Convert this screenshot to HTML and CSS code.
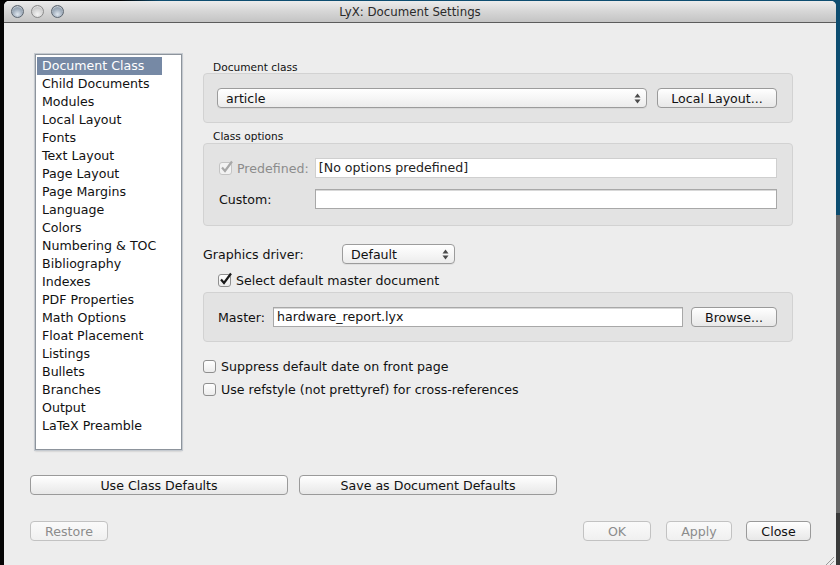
FILE: index.html
```html
<!DOCTYPE html>
<html>
<head>
<meta charset="utf-8">
<link rel="stylesheet" href="styles.css">
</head>
<body>
<div class="screen">
  <div class="edge-left"></div>
  <div class="window">
    <div class="titlebar">
      <div class="lights">
        <span class="light"></span>
        <span class="light light-mid"></span>
        <span class="light"></span>
      </div>
      <div class="title">LyX: Document Settings</div>
    </div>
    <div class="content">
      <div class="main">
        <div class="list">
          <div class="item selected">Document Class</div>
          <div class="item">Child Documents</div>
          <div class="item">Modules</div>
          <div class="item">Local Layout</div>
          <div class="item">Fonts</div>
          <div class="item">Text Layout</div>
          <div class="item">Page Layout</div>
          <div class="item">Page Margins</div>
          <div class="item">Language</div>
          <div class="item">Colors</div>
          <div class="item">Numbering &amp; TOC</div>
          <div class="item">Bibliography</div>
          <div class="item">Indexes</div>
          <div class="item">PDF Properties</div>
          <div class="item">Math Options</div>
          <div class="item">Float Placement</div>
          <div class="item">Listings</div>
          <div class="item">Bullets</div>
          <div class="item">Branches</div>
          <div class="item">Output</div>
          <div class="item">LaTeX Preamble</div>
        </div>
        <div class="rcol">
          <div class="glabel">Document class</div>
          <div class="group g1">
            <div class="combo combo-class"><span class="combo-text">article</span><span class="arrows"><svg width="7" height="11" viewBox="0 0 7 11"><path d="M3.5 0.5 L6.5 4.5 H0.5 Z" fill="#4a4a4a"/><path d="M3.5 10.5 L6.5 6.5 H0.5 Z" fill="#4a4a4a"/></svg></span></div>
            <div class="btn btn-local">Local Layout...</div>
          </div>
          <div class="glabel glabel2">Class options</div>
          <div class="group g2">
            <div class="frow">
              <div class="flabel disabled"><span class="cb cb-dis"><svg width="16" height="14" viewBox="0 0 16 14"><path d="M3 7.5 L6 11 L13 1.5" fill="none" stroke="#a8a8a8" stroke-width="2.2"/></svg></span>Predefined:</div>
              <div class="field field-dis">[No options predefined]</div>
            </div>
            <div class="frow frow2">
              <div class="flabel">Custom:</div>
              <div class="field"></div>
            </div>
          </div>
          <div class="gdrow">
            <div class="gdlabel">Graphics driver:</div>
            <div class="combo combo-gd"><span class="combo-text">Default</span><span class="arrows"><svg width="7" height="11" viewBox="0 0 7 11"><path d="M3.5 0.5 L6.5 4.5 H0.5 Z" fill="#4a4a4a"/><path d="M3.5 10.5 L6.5 6.5 H0.5 Z" fill="#4a4a4a"/></svg></span></div>
          </div>
          <div class="checkrow master-check"><span class="cb cb-on"><svg width="16" height="14" viewBox="0 0 16 14"><path d="M3 7.5 L6 11 L13 1.5" fill="none" stroke="#1a1a1a" stroke-width="2.2"/></svg></span>Select default master document</div>
          <div class="group g3">
            <div class="mlabel">Master:</div>
            <div class="field field-master">hardware_report.lyx</div>
            <div class="btn btn-browse">Browse...</div>
          </div>
          <div class="checkrow plain c1"><span class="cb"></span>Suppress default date on front page</div>
          <div class="checkrow plain c2"><span class="cb"></span>Use refstyle (not prettyref) for cross-references</div>
        </div>
      </div>
      <div class="brow1">
        <div class="btn wide">Use Class Defaults</div>
        <div class="btn wide">Save as Document Defaults</div>
      </div>
      <div class="brow2">
        <div class="btn btn-dis b-restore">Restore</div>
        <div class="spacer"></div>
        <div class="btn btn-dis b-ok">OK</div>
        <div class="btn btn-dis b-apply">Apply</div>
        <div class="btn b-close">Close</div>
      </div>
      <div class="grip"><svg width="10" height="10" viewBox="0 0 10 10"><path d="M2 10 L10 2 M6 10 L10 6" stroke="#9a9a9a" stroke-width="1"/></svg></div>
    </div>
  </div>
  <div class="edge-right">
    <div class="er-blue"></div>
    <div class="er-grey"></div>
    <div class="er-dark"></div>
  </div>
</div>
</body>
</html>
```
FILE: styles.css
```css
* { box-sizing: border-box; }
html, body { margin: 0; padding: 0; }
body {
  width: 840px;
  height: 565px;
  overflow: hidden;
  background: linear-gradient(90deg, #000 0, #000 120px, #0d4d70 160px);
  font-family: "DejaVu Sans", "Liberation Sans", sans-serif;
  font-size: 12.6px;
  color: #111;
}
.screen { display: flex; width: 840px; height: 565px; }
.edge-left { width: 4px; margin-top: 1px; background: #050505; }
.window {
  width: 832px;
  height: 564px;
  margin-top: 1px;
  background: #ededed;
  border-radius: 5px 5px 0 0;
  display: flex;
  flex-direction: column;
  overflow: hidden;
}
.edge-right { width: 4px; display: flex; flex-direction: column; }
.er-blue { height: 215px; background: #0d4d70; }
.er-grey { height: 298px; background: #6a6a6a; }
.er-dark { flex: 1; background: #3a3a3a; }

.titlebar {
  position: relative;
  height: 22px;
  flex: none;
  background: linear-gradient(#ececec, #d6d6d6 50%, #c4c4c4);
  border-bottom: 1px solid #5c5c5c;
  display: flex;
  align-items: center;
  justify-content: center;
}
.lights { position: absolute; left: 7px; top: 4px; display: flex; gap: 7px; }
.light {
  width: 13px; height: 13px; border-radius: 50%;
  background: radial-gradient(circle at 50% 75%, #dfe6ee 0, #a5b2c0 45%, #6f7f90 100%);
  border: 1px solid #5d6670;
  box-shadow: inset 0 1px 1px rgba(255,255,255,0.6);
}
.light-mid {
  background: radial-gradient(circle at 50% 75%, #f4f4f4 0, #d4d4d4 50%, #a8a8a8 100%);
  border-color: #8a8a8a;
}
.title { font-size: 11.8px; color: #2a2a2a; padding-top: 1px; margin-right: 20px; }

.content { flex: 1; position: relative; padding: 0 25px 0 26px; }
.main { display: flex; padding-top: 31px; padding-left: 5px; }

.list {
  width: 147px; height: 396px;
  background: #fff;
  border: 1px solid #8d949c;
  box-shadow: 0 0 0 1px #c5cad0, 0 1px 2px rgba(0,0,0,0.25);
  padding: 2px 0 0 1px;
}
.item { height: 18px; line-height: 18px; padding-left: 5px; white-space: nowrap; }
.item.selected { background: #7689a5; color: #fff; width: 125px; }

.rcol { margin-left: 21px; width: 590px; padding-top: 5px; }
.glabel { height: 14px; line-height: 16px; font-size: 10.6px; padding-left: 10px; }
.glabel2 { margin-top: 5px; height: 15px; }
.group {
  background: #e3e3e3;
  border: 1px solid #d2d2d2;
  border-radius: 4px;
}
.g1 { height: 50px; display: flex; align-items: center; padding: 0 15px 0 13px; }
.combo {
  height: 20px;
  display: flex; align-items: center;
  background: linear-gradient(#ffffff, #f6f6f6 50%, #ececec);
  border: 1px solid #9c9c9c;
  border-radius: 4px;
  box-shadow: 0 1px 0 rgba(0,0,0,0.05);
  padding: 0 5px 0 8px;
}
.combo-text { flex: 1; }
.arrows { display: flex; align-items: center; }
.combo-class { width: 430px; }
.btn {
  height: 20px;
  display: flex; align-items: center; justify-content: center;
  background: linear-gradient(#ffffff, #f3f3f3 50%, #e8e8e8);
  border: 1px solid #9a9a9a;
  border-radius: 4px;
  white-space: nowrap;
}
.btn-local { width: 120px; margin-left: 10px; }

.g2 { height: 83px; padding: 14px 15px 0 14px; }
.frow { display: flex; align-items: center; height: 20px; }
.frow2 { margin-top: 11px; }
.flabel { width: 97px; display: flex; align-items: center; padding-left: 1px; }
.flabel.disabled { color: #8c8c8c; }
.field {
  width: 463px; height: 20px;
  background: #fff;
  border: 1px solid #a8a8a8;
  box-shadow: inset 0 1px 0 #d8d8d8;
  padding-left: 3px;
  line-height: 18px;
}
.field-dis { border-color: #cfcfcf; box-shadow: none; color: #222; }

.cb {
  position: relative;
  width: 13px; height: 13px;
  border: 1px solid #8f8f8f;
  border-radius: 3px;
  background: linear-gradient(#ffffff, #ececec);
  margin-right: 5px;
  flex: none;
}
.cb svg { position: absolute; left: -1px; top: -3px; }
.cb-dis { border-color: #c4c4c4; background: #f2f2f2; }

.gdrow { display: flex; align-items: center; margin-top: 18px; height: 20px; }
.gdlabel { width: 139px; }
.combo-gd { width: 113px; }

.checkrow { display: flex; align-items: center; height: 16px; }
.master-check { margin-top: 8px; padding-left: 15px; }
.g3 { height: 50px; margin-top: 4px; display: flex; align-items: center; padding: 0 15px 0 14px; }
.mlabel { width: 55px; }
.field-master { width: 410px; }
.btn-browse { width: 86px; margin-left: 8px; }
.c1 { margin-top: 16px; }
.c2 { margin-top: 7px; }

.brow1 { display: flex; gap: 11px; margin-top: 25px; }
.wide { width: 258px; }
.brow2 { display: flex; margin-top: 26px; }
.spacer { flex: 1; }
.btn-dis { color: #8c8c8c; border-color: #c2c2c2; background: linear-gradient(#fafafa, #f0f0f0); }
.b-restore { width: 78px; }
.b-ok { width: 68px; }
.b-apply { width: 66px; margin-left: 15px; }
.b-close { width: 65px; margin-left: 14px; }
.grip { position: absolute; right: 2px; bottom: 0; line-height: 0; }
```
